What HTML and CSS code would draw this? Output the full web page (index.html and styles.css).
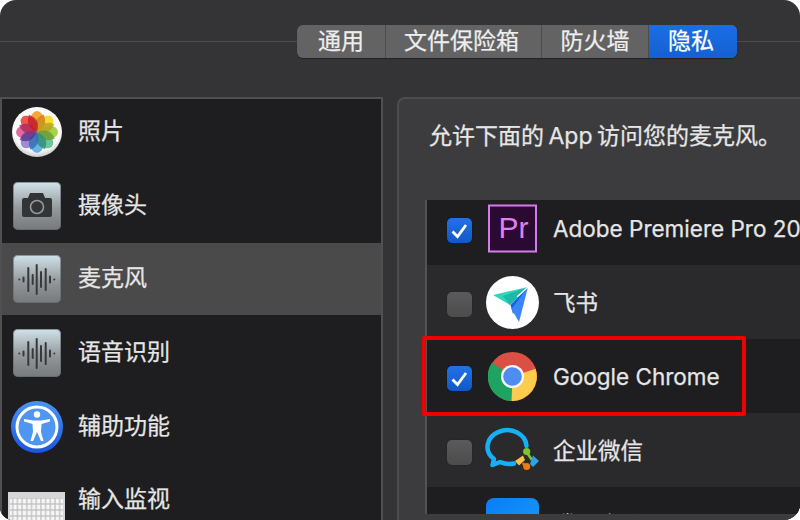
FILE: index.html
```html
<html>

<head>
    <title>安全性与隐私</title>
    <link rel="stylesheet" href="styles.css">
</head>

<body>
    <div class="window">
        <nav class="tabs">
            <span class="tab tab-general">通用</span>
            <span class="tab tab-vault">文件保险箱</span>
            <span class="tab tab-firewall">防火墙</span>
            <span class="tab tab-privacy">隐私</span>
        </nav>

        <div class="content">
            <ul class="sidebar">
                <li class="side-row">
                    <svg class="side-icon" viewBox="0 0 50 50">
                        <defs>
                            <radialGradient id="rim" cx="50%" cy="40%" r="60%">
                                <stop offset="0.8" stop-color="#fbfbfb"/>
                                <stop offset="1" stop-color="#c9c9c9"/>
                            </radialGradient>
                            <path id="petal" d="M25 25 C20 19 18 13 25 6 C32 13 30 19 25 25Z"/>
                        </defs>
                        <circle cx="25" cy="25" r="25" fill="url(#rim)"/>
                        <ellipse cx="25" cy="13.5" rx="6.6" ry="9.5" fill="#f9a53a"/>
                        <ellipse cx="25" cy="13.5" rx="6.6" ry="9.5" fill="#fbdc2e" transform="rotate(45 25 25)"/>
                        <ellipse cx="25" cy="13.5" rx="6.6" ry="9.5" fill="#a8d24a" transform="rotate(90 25 25)"/>
                        <ellipse cx="25" cy="13.5" rx="6.6" ry="9.5" fill="#69c79a" transform="rotate(135 25 25)"/>
                        <ellipse cx="25" cy="13.5" rx="6.6" ry="9.5" fill="#6ab2ea" transform="rotate(180 25 25)"/>
                        <ellipse cx="25" cy="13.5" rx="6.6" ry="9.5" fill="#a08cd2" transform="rotate(225 25 25)"/>
                        <ellipse cx="25" cy="13.5" rx="6.6" ry="9.5" fill="#e06a9e" transform="rotate(270 25 25)"/>
                        <ellipse cx="25" cy="13.5" rx="6.6" ry="9.5" fill="#f2544e" transform="rotate(315 25 25)"/>
                        <use href="#petal" fill="#c9801f" transform="rotate(20 25 25)" opacity="0.8"/>
                        <use href="#petal" fill="#b8a41e" transform="rotate(65 25 25)" opacity="0.8"/>
                        <use href="#petal" fill="#6e9a2c" transform="rotate(110 25 25)" opacity="0.8"/>
                        <use href="#petal" fill="#2f8f72" transform="rotate(155 25 25)" opacity="0.8"/>
                        <use href="#petal" fill="#2e6fb4" transform="rotate(200 25 25)" opacity="0.8"/>
                        <use href="#petal" fill="#4a3a94" transform="rotate(245 25 25)" opacity="0.8"/>
                        <use href="#petal" fill="#a72a62" transform="rotate(290 25 25)" opacity="0.8"/>
                        <use href="#petal" fill="#c01f26" transform="rotate(335 25 25)" opacity="0.8"/>
                    </svg>
                    <span class="side-label">照片</span>
                </li>
                <li class="side-row">
                    <span class="metal-tile">
                        <svg viewBox="0 0 48 48">
                            <path d="M9 16 H15 L17 11 H30 L32 16 H37 Q39 16 39 18 V33 Q39 35 37 35 H11 Q9 35 9 33 V18 Q9 16 11 16Z" fill="#333436"/>
                            <circle cx="24" cy="25" r="6.500" fill="none" stroke="#96989a" stroke-width="1.600"/>
                        </svg>
                    </span>
                    <span class="side-label">摄像头</span>
                </li>
                <li class="side-row side-row-active">
                    <span class="metal-tile">
                        <svg viewBox="0 0 48 48" stroke="#38393b" stroke-width="2" stroke-linecap="round">
                            <path d="M6.300 24.500v.1M10.500 22.500v4M15.300 13v23M19.700 20v9M23.700 10v29M28 17v15M32.700 14v21M37 21.500v6M41.300 24.500v.1"/>
                        </svg>
                    </span>
                    <span class="side-label">麦克风</span>
                </li>
                <li class="side-row">
                    <span class="metal-tile">
                        <svg viewBox="0 0 48 48" stroke="#38393b" stroke-width="2" stroke-linecap="round">
                            <path d="M6.300 24.500v.1M10.500 22.500v4M15.300 13v23M19.700 20v9M23.700 10v29M28 17v15M32.700 14v21M37 21.500v6M41.300 24.500v.1"/>
                        </svg>
                    </span>
                    <span class="side-label">语音识别</span>
                </li>
                <li class="side-row">
                    <svg class="side-icon side-icon-round" viewBox="0 0 52 52">
                        <defs>
                            <linearGradient id="a11y" x1="0" y1="0" x2="0" y2="1">
                                <stop offset="0" stop-color="#4a95f5"/>
                                <stop offset="1" stop-color="#1a55e0"/>
                            </linearGradient>
                        </defs>
                        <circle cx="26" cy="26" r="26" fill="url(#a11y)"/>
                        <circle cx="26" cy="26" r="20" fill="#4f96f0" stroke="#fff" stroke-width="3"/>
                        <circle cx="26" cy="13.500" r="3.200" fill="#fff"/>
                        <path d="M13 18 L22 19.500 H30 L39 18 V20.500 L30.500 23 L30 31 L32.500 40 H30 L26 31 L22 40 H19.500 L22 31 L21.500 23 L13 20.500Z" fill="#fff"/>
                    </svg>
                    <span class="side-label">辅助功能</span>
                </li>
                <li class="side-row">
                    <svg class="side-keyboard" viewBox="0 0 57 36">
                        <defs>
                            <pattern id="keys" width="4.700" height="6" patternUnits="userSpaceOnUse">
                                <rect width="4.700" height="6" fill="#bdbdbd"/>
                                <rect x="0.600" y="0.600" width="3.500" height="4.800" fill="#f6f6f6"/>
                            </pattern>
                        </defs>
                        <rect width="57" height="36" fill="#d6d6d6"/>
                        <rect x="2" y="6" width="53" height="30" fill="url(#keys)"/>
                    </svg>
                    <span class="side-label">输入监视</span>
                </li>
            </ul>

            <section class="panel">
                <p class="panel-title">允许下面的 App 访问您的麦克风。</p>
                <ul class="apps">
                    <li class="app-row">
                        <span class="check check-on">
                            <svg viewBox="0 0 25 25"><path d="M5.500 13.500 L10.500 18.500 L19 7" fill="none" stroke="#fff" stroke-width="2.800"/></svg>
                        </span>
                        <svg class="app-icon" viewBox="0 0 49 48">
                            <rect x="1" y="1" width="47" height="46" fill="#2a0a33" stroke="#d47de8" stroke-width="2"/>
                            <text x="10.500" y="33" class="pr-text">Pr</text>
                        </svg>
                        <span>Adobe Premiere Pro 2020</span>
                    </li>
                    <li class="app-row">
                        <span class="check"></span>
                        <svg class="app-icon app-icon-feishu" viewBox="0 0 53 53">
                            <circle cx="26.500" cy="26.500" r="26.500" fill="#fff"/>
                            <path d="M7 19 L42 11 L24 29 Z" fill="#2fd6bd"/>
                            <path d="M17 20 L42 11 L24 29 Z" fill="#1db9a8"/>
                            <path d="M42 11 L24.500 29 L27 38 Z" fill="#1a5fe0"/>
                            <path d="M42 11 L33 46 L25.500 33 Z" fill="#3a86f8"/>
                            <path d="M31 21 L42 11" stroke="#fff" stroke-width="1.500"/>
                        </svg>
                        <span class="app-name-cjk">飞书</span>
                    </li>
                    <li class="app-row app-row-marked">
                        <span class="check check-on">
                            <svg viewBox="0 0 25 25"><path d="M5.500 13.500 L10.500 18.500 L19 7" fill="none" stroke="#fff" stroke-width="2.800"/></svg>
                        </span>
                        <svg class="app-icon" viewBox="0 0 50 50">
                            <circle cx="25" cy="25" r="25" fill="#db5044"/>
                            <path d="M25 25 L4 11 A25 25 0 0 0 24 50Z" fill="#1ea362"/>
                            <path d="M25 25 L48.500 17 A25 25 0 0 1 24 50Z" fill="#fdcc4d"/>
                            <circle cx="25" cy="25" r="11.800" fill="#f2f4f8"/>
                            <circle cx="25" cy="25" r="9.500" fill="#4e8cf2"/>
                        </svg>
                        <span>Google Chrome</span>
                    </li>
                    <li class="app-row">
                        <span class="check"></span>
                        <svg class="app-icon app-icon-wecom" viewBox="0 0 55 43">
                            <path d="M41.500 19 A19.500 16.500 0 1 0 9 32 L7.500 38 L15 35 Q22 38 29 36.500" fill="none" stroke="#17b0f5" stroke-width="4.500" stroke-linejoin="round" stroke-linecap="round"/>
                            <path d="M41.500 25 L47 33" stroke="#7bc62d" stroke-width="2.500"/>
                            <circle cx="41.700" cy="24.500" r="3.600" fill="#7bc62d"/>
                            <path d="M30 34 L38 28.500 L40 33 L34 38.500Z" fill="#f7c04a"/>
                            <path d="M48 28.500 L54 34 L48 40 L45 37Z" fill="#2aa3e8"/>
                            <path d="M38 36 L41 41" stroke="#ed7a12" stroke-width="2.500"/>
                            <circle cx="41.700" cy="39.500" r="3.500" fill="#ed7a12"/>
                        </svg>
                        <span class="app-name-cjk">企业微信</span>
                    </li>
                    <li class="app-row">
                        <span class="check check-hidden"></span>
                        <span class="app-tile"></span>
                        <span class="app-name-cjk">腾讯会议</span>
                    </li>
                </ul>
            </section>
        </div>
    </div>
</body>

</html>
```

FILE: styles.css
```css
*,
*::before,
*::after {
    box-sizing: border-box;
}

html,
body {
    margin: 0;
    height: 100%;
    background: #fff;
    overflow: hidden;
}

body {
    font-family: Inter, "Noto Sans CJK SC", sans-serif;
    color: #e6e6e6;
    -webkit-text-stroke: 0.25px;
}

ul {
    list-style: none;
    margin: 0;
    padding: 0;
}

.window {
    position: relative;
    width: 800px;
    height: 520px;
    overflow: hidden;
    border-radius: 16px 16px 16px 13px;
    background: #343436;
}

/* divider behind the tabs */
.window::before {
    content: "";
    position: absolute;
    left: 0;
    right: 0;
    top: 41px;
    height: 1px;
    background: #4c4c4e;
}

.tabs {
    position: absolute;
    left: 297px;
    top: 25px;
    display: flex;
    width: 440px;
    height: 33px;
    border-radius: 6px;
    overflow: hidden;
    background: #636363;
    box-shadow: 0 1px 1px rgba(0, 0, 0, 0.35);
    font-size: 23px;
    line-height: 32px;
    text-align: center;
    color: #eeeeee;
}

.tab {
    display: block;
    border-right: 1px solid #4c4c4c;
}

.tab-general {
    width: 89px;
}

.tab-vault {
    width: 156px;
    padding-right: 4px;
}

.tab-firewall {
    width: 107px;
}

.tab-privacy {
    width: 88px;
    padding-right: 4px;
    border-right: 0;
    background: linear-gradient(#1a6ee4, #1560d2);
    color: #fff;
}

.content {
    display: flex;
    gap: 14px;
    padding-top: 97px;
    height: 520px;
}

.sidebar {
    flex: none;
    width: 383px;
    height: 440px;
    background: #1e1e20;
    border: 2px solid #505052;
    border-bottom: 0;
    overflow: hidden;
}

.side-row {
    display: flex;
    align-items: center;
    height: 73.670px;
    padding-left: 10px;
    gap: 16px;
    font-size: 23px;
}

.side-row:first-child {
    margin-top: -3.800px;
}

.side-row-active {
    background: linear-gradient(#4a4a4a, #4a4a4a) no-repeat top / 100% 72px;
}

.side-label {
    margin-bottom: 6px;
}

.side-icon {
    flex: none;
    width: 50px;
    height: 50px;
}

.side-icon-round {
    width: 52px;
    height: 52px;
    margin: 0 -1px;
}

.side-keyboard {
    flex: none;
    width: 57px;
    height: 36px;
    margin: 20px -3px 0 -4px;
}

.metal-tile {
    flex: none;
    display: block;
    width: 48px;
    height: 48px;
    margin: 0 1px;
    border-radius: 5px;
    background: linear-gradient(#d0e3ea, #94989a 55%, #77797b);
    box-shadow: inset 0 0 0 1px rgba(90, 100, 108, 0.6);
}

.metal-tile svg {
    display: block;
    width: 48px;
    height: 48px;
}

.panel {
    flex: 1;
    min-width: 0;
    height: 440px;
    padding: 21px 0 0 30px;
    border: 2px solid #4c4c4e;
    border-right: 0;
    border-bottom: 0;
    border-radius: 8px 0 0 0;
    background: #3c3c3e;
}

.panel-title {
    margin: 0;
    height: 80px;
    font-size: 23px;
    line-height: 32px;
    word-spacing: -2px;
    color: #e6e6e6;
    white-space: nowrap;
}

/* clip-path rather than overflow, the red frame sticks out on the left */
.apps {
    height: 314px;
    margin-left: -4px;
    clip-path: inset(0 0 0 -10px);
    border: 2px solid #525254;
    border-right: 0;
    background: #1e1e20;
}

.app-row {
    display: flex;
    align-items: center;
    height: 74px;
    padding-left: 20px;
    gap: 16px;
    font-size: 22.500px;
    white-space: nowrap;
    background: #1e1e20;
}

.app-row:first-child {
    margin-top: -11px;
}

.app-row:nth-child(even) {
    background: #2a2a2c;
}

.app-name-cjk {
    margin-bottom: 3px;
}

/* red annotation frame around the row */
.app-row-marked {
    position: relative;
}

.app-row-marked::after {
    content: "";
    position: absolute;
    left: -5px;
    top: -3px;
    width: 324px;
    height: 80px;
    border: 4px solid #f00000;
    border-radius: 2px;
}

.check {
    flex: none;
    display: block;
    width: 25px;
    height: 25px;
    margin-top: 5px;
    border-radius: 5px;
    background: linear-gradient(#5a5a5a, #4c4c4c);
    box-shadow: 0 0 1px rgba(0, 0, 0, 0.6);
}

.check svg {
    display: block;
}

.check-on {
    background: linear-gradient(#2272e6, #1257c8);
}

.check-hidden {
    visibility: hidden;
}

.app-icon {
    flex: none;
    width: 49px;
    height: 49px;
}

.app-icon-feishu {
    width: 53px;
    height: 53px;
    margin: 0 -2px;
}

.app-icon-wecom {
    width: 55px;
    height: 43px;
    margin: -4px -3px 0;
}

.pr-text {
    font-family: "Liberation Sans", sans-serif;
    font-size: 30px;
    fill: #e07ff0;
    stroke: none;
}

.app-tile {
    flex: none;
    width: 53px;
    height: 52px;
    margin: 0 -2px;
    border-radius: 8px;
    background: linear-gradient(135deg, #0a7df5, #1a9cf8);
}
```
